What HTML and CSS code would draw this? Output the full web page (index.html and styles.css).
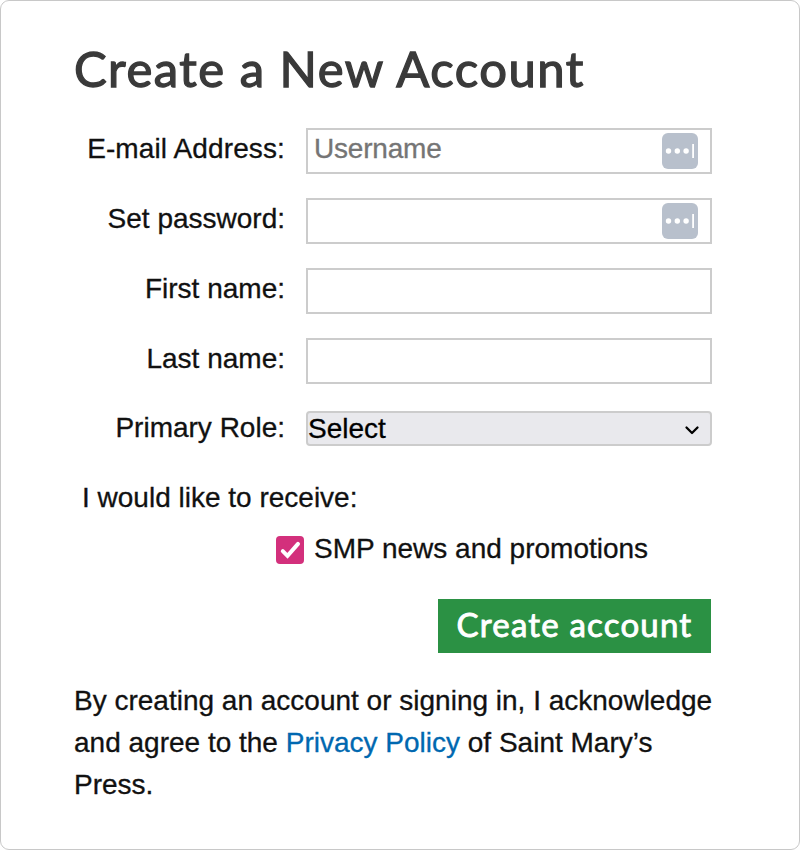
FILE: index.html
```html
<!DOCTYPE html>
<html lang="en">
<head>
    <meta charset="UTF-8">
    <meta name="viewport" content="width=device-width, initial-scale=1.0">
    <title>Create a New Account</title>
    <link rel="stylesheet" href="styles.css">
</head>
<body>
    <div class="container">
        <h1>Create a New Account</h1>

        <form>
            <div class="row">
                <label for="email" class="email-label">E-mail Address:</label>
                <div class="field">
                    <input type="text" id="email" placeholder="Username">
                    <svg class="key-icon" width="36" height="36" viewBox="0 0 36 36">
                        <rect width="36" height="36" rx="6" fill="#b8c0cc"/>
                        <g fill="#fff">
                            <circle cx="6.5" cy="18" r="2.7"/>
                            <circle cx="15.3" cy="18" r="2.7"/>
                            <circle cx="24.100" cy="18" r="2.7"/>
                            <rect x="30.2" y="11" width="1.8" height="14"/>
                        </g>
                    </svg>
                </div>
            </div>

            <div class="row">
                <label for="password">Set password:</label>
                <div class="field">
                    <input type="password" id="password">
                    <svg class="key-icon" width="36" height="36" viewBox="0 0 36 36">
                        <rect width="36" height="36" rx="6" fill="#b8c0cc"/>
                        <g fill="#fff">
                            <circle cx="6.5" cy="18" r="2.7"/>
                            <circle cx="15.3" cy="18" r="2.7"/>
                            <circle cx="24.100" cy="18" r="2.7"/>
                            <rect x="30.2" y="11" width="1.8" height="14"/>
                        </g>
                    </svg>
                </div>
            </div>

            <div class="row">
                <label for="first">First name:</label>
                <div class="field"><input type="text" id="first"></div>
            </div>

            <div class="row">
                <label for="last">Last name:</label>
                <div class="field"><input type="text" id="last"></div>
            </div>

            <div class="row role-row">
                <label for="role">Primary Role:</label>
                <div class="field">
                    <select id="role">
                        <option>Select</option>
                    </select>
                    <svg class="arrow" width="16" height="12" viewBox="0 0 16 12">
                        <path d="M2.500 3.500 L8 9 L13.500 3.500" fill="none" stroke="#000" stroke-width="2.3" stroke-linecap="round" stroke-linejoin="round"/>
                    </svg>
                </div>
            </div>

            <p class="receive">I would like to receive:</p>

            <label class="check-row">
                <input type="checkbox" class="hidden-check" checked>
                <svg width="28" height="28" viewBox="0 0 28 28">
                    <rect width="28" height="28" rx="4" fill="#d3307c"/>
                    <path d="M6.800 15.200 L11.500 19.900 L22 7.900" fill="none" stroke="#fff" stroke-width="4" stroke-linecap="round"/>
                </svg>
                <span>SMP news and promotions</span>
            </label>

            <div class="actions">
                <button type="button">Create account</button>
            </div>
        </form>

        <p class="terms">By creating an account or signing in, I acknowledge and agree to the <a href="#">Privacy Policy</a> of Saint Mary’s Press.</p>
    </div>
</body>
</html>
```
FILE: styles.css
```css
* {
    box-sizing: border-box;
}
body {
    margin: 0;
    background: #fff;
    color: #111;
    font-family: "Liberation Sans", Arial, sans-serif;
    font-size: 28px;
    -webkit-text-stroke: 0.3px;
}
.container {
    width: 800px;
    height: 850px;
    padding: 37px 73px 0;
    border: 1px solid #c8c8c8;
    border-radius: 9px;
}
h1 {
    margin: 0 0 30px;
    height: 60px;
    line-height: 60px;
    font-family: Lato, sans-serif;
    font-size: 49px;
    font-weight: 400;
    color: #3a3a3a;
    -webkit-text-stroke: 1.3px #3a3a3a;
    letter-spacing: 1.5px;
    white-space: nowrap;
}
.row {
    display: flex;
    height: 46px;
    margin-bottom: 24px;
}
.row label {
    width: 211px;
    margin-right: 21px;
    line-height: 42px;
    text-align: right;
    white-space: nowrap;
}
.row .email-label {
    letter-spacing: 0.12px;
}
.field {
    position: relative;
    width: 406px;
}
.field input {
    display: block;
    width: 100%;
    height: 46px;
    padding: 0 6px 4px;
    border: 2px solid #ccc;
    background: #fff;
    font: inherit;
    letter-spacing: -0.2px;
    outline: none;
}
.field input::placeholder {
    color: #757575;
}
.key-icon {
    position: absolute;
    top: 5px;
    right: 14px;
}
.role-row {
    height: 35px;
    margin: 27px 0 0;
}
.role-row label {
    line-height: 34px;
}
select {
    display: block;
    width: 100%;
    height: 35px;
    padding: 0 0 3px;
    border: 2px solid #ccc;
    border-radius: 4px;
    background: #e9e9ed;
    color: #000;
    font: inherit;
    appearance: none;
}
.arrow {
    position: absolute;
    top: 13px;
    right: 12px;
}
.receive {
    margin: 31px 0 0 8px;
    line-height: 42px;
}
.check-row {
    display: flex;
    align-items: center;
    margin: 17px 0 0 202px;
    height: 28px;
}
.check-row span {
    margin: -2px 0 0 10px;
    white-space: nowrap;
}
.hidden-check {
    display: none;
}
.actions {
    display: flex;
    justify-content: flex-end;
    margin: 35px 15px 0 0;
}
button {
    width: 273px;
    height: 54px;
    padding: 0 0 4px;
    border: none;
    background: #2b9144;
    color: #fff;
    font-family: Lato, sans-serif;
    font-size: 33px;
    -webkit-text-stroke: 0.9px #fff;
    letter-spacing: 1.2px;
    white-space: nowrap;
}
.terms {
    width: 645px;
    margin: 27px 0 0;
    line-height: 42px;
}
.terms a {
    color: #0068b0;
    text-decoration: none;
}
```
